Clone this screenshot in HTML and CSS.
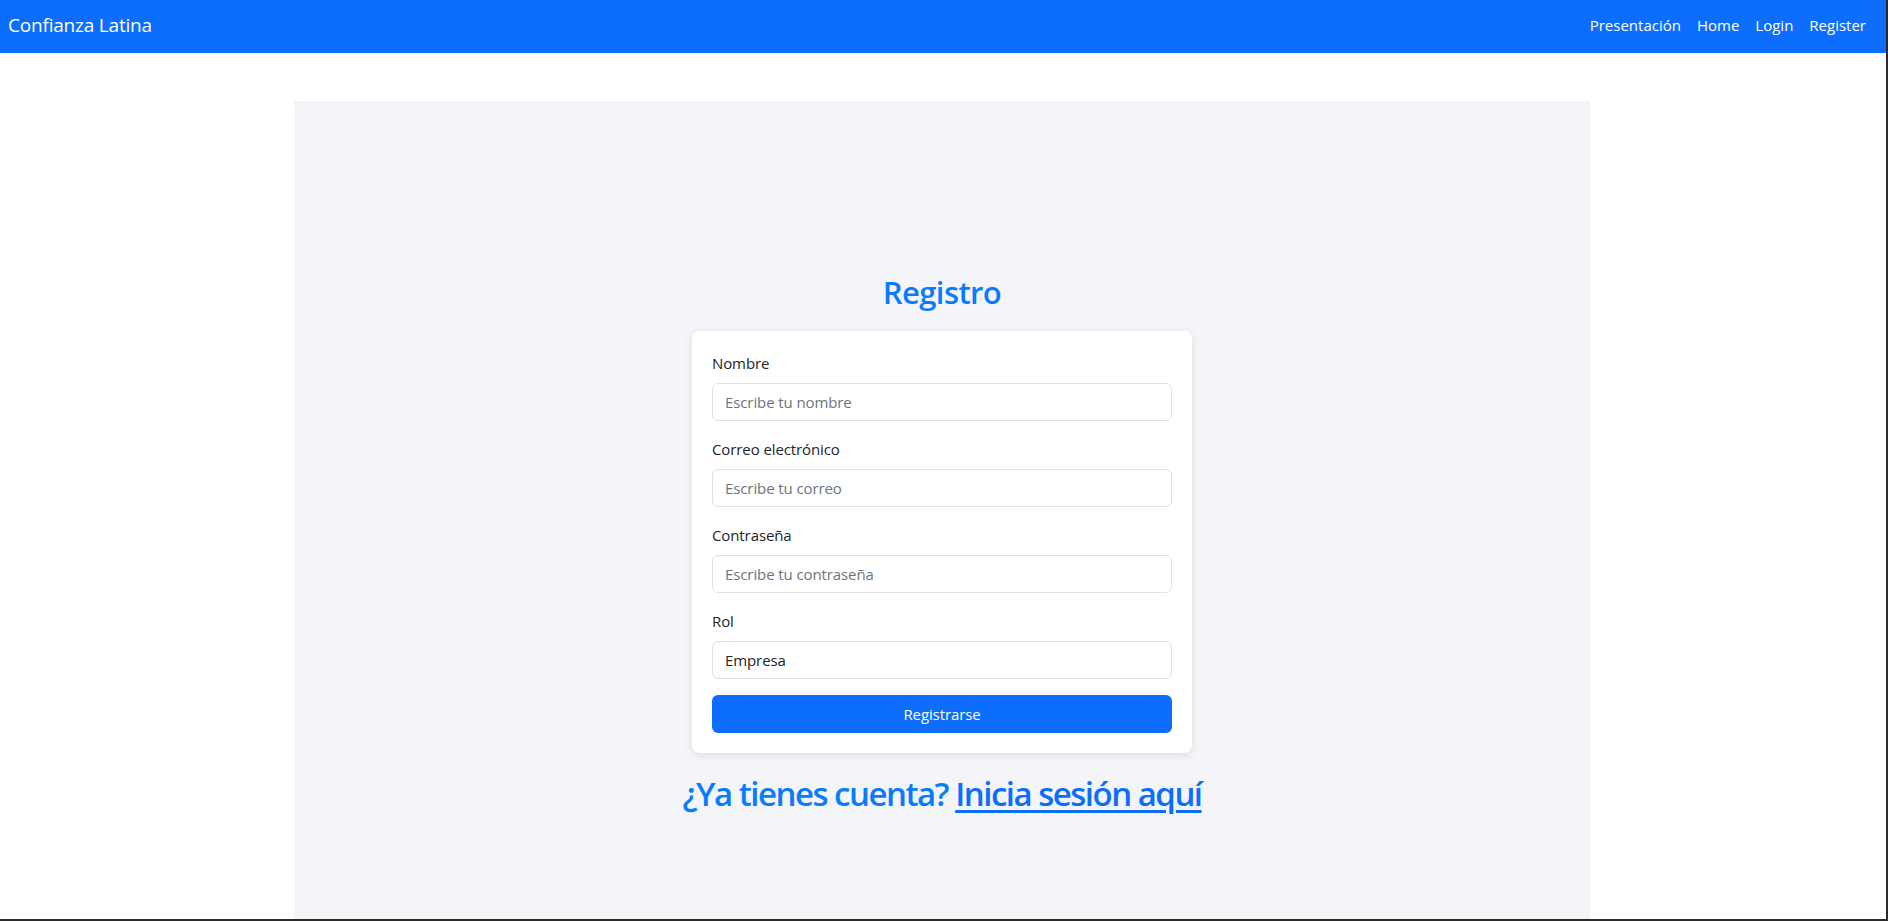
FILE: index.html
```html
<!DOCTYPE html>
<html lang="es">
<head>
<meta charset="utf-8">
<title>Registro - Confianza Latina</title>
<link rel="stylesheet" href="styles.css">
</head>
<body>
<nav class="navbar">
  <a class="brand" href="#">Confianza Latina</a>
  <ul class="nav-links">
    <li><a href="#">Presentación</a></li>
    <li><a href="#">Home</a></li>
    <li><a href="#">Login</a></li>
    <li><a href="#">Register</a></li>
  </ul>
</nav>
<main class="main">
  <section class="panel">
    <h2 class="title">Registro</h2>
    <form class="card">
      <div class="field">
        <label class="label" for="nombre">Nombre</label>
        <input class="input" id="nombre" type="text" placeholder="Escribe tu nombre">
      </div>
      <div class="field">
        <label class="label" for="correo">Correo electrónico</label>
        <input class="input" id="correo" type="email" placeholder="Escribe tu correo">
      </div>
      <div class="field">
        <label class="label" for="pass">Contraseña</label>
        <input class="input" id="pass" type="password" placeholder="Escribe tu contraseña">
      </div>
      <div class="field">
        <label class="label" for="rol">Rol</label>
        <div class="input select" id="rol">Empresa</div>
      </div>
      <button class="btn" type="button">Registrarse</button>
    </form>
    <h2 class="cta">¿Ya tienes cuenta? <a href="#" class="cta-link">Inicia sesión aquí</a></h2>
  </section>
</main>
<div class="frame"></div>
</body>
</html>
```

FILE: styles.css
```css
* { box-sizing: border-box; }
html, body { margin: 0; padding: 0; }
body {
  font-family: "Open Sans", "Noto Sans", "Liberation Sans", sans-serif;
  color: #212529;
  background: #fff;
  height: 921px;
  overflow: hidden;
}
.navbar {
  height: 53px;
  background: #0d6efd;
  display: flex;
  align-items: center;
  justify-content: space-between;
  padding: 0 12px 4px 8px;
  margin-right: 2px;
}
.brand {
  color: #fff;
  text-decoration: none;
  font-size: 19px;
  letter-spacing: -0.2px;
}
.nav-links {
  list-style: none;
  margin: 0;
  padding: 0;
  display: flex;
}
.nav-links a {
  display: block;
  color: #fff;
  text-decoration: none;
  font-size: 15px;
  padding: 0 8px;
  letter-spacing: 0;
}
.main {
  padding: 48px 4px 0 0;
}
.panel {
  width: 1296px;
  margin: 0 auto;
  min-height: 921px;
  background: #f4f5f9;
  display: flex;
  flex-direction: column;
  align-items: center;
  padding-top: 171px;
}
.title {
  margin: 0 0 19px;
  font-size: 31px;
  line-height: 40px;
  font-weight: 600;
  color: #0a7bfb;
  letter-spacing: -0.6px;
}
.card {
  width: 500px;
  background: #fff;
  border-radius: 8px;
  box-shadow: 0 2px 8px rgba(0, 0, 0, 0.1);
  padding: 20px;
  display: flex;
  flex-direction: column;
}
.field {
  display: flex;
  flex-direction: column;
  margin-bottom: 16px;
}
.label {
  font-size: 15px;
  line-height: 24px;
  margin-bottom: 8px;
  color: #212529;
  letter-spacing: -0.1px;
}
.input {
  height: 38px;
  border: 1px solid #dee2e6;
  border-radius: 6px;
  padding: 0 12px;
  font-family: inherit;
  font-size: 15px;
  color: #212529;
  background: #fff;
  outline: none;
  letter-spacing: -0.1px;
}
.input::placeholder { color: #6c757d; }
.select {
  display: flex;
  align-items: center;
}
.btn {
  height: 38px;
  border: 0;
  border-radius: 6px;
  background: #0d6efd;
  color: #fff;
  font-family: inherit;
  font-size: 15px;
  letter-spacing: -0.1px;
}
.cta {
  margin: 21px 0 0;
  font-size: 33px;
  line-height: 40px;
  font-weight: 600;
  color: #0a7bfb;
  letter-spacing: -1.5px;
}
.cta-link {
  color: #0d6efd;
  text-decoration: underline;
  text-underline-offset: 4px;
}
.frame {
  position: fixed;
  inset: 0;
  border-right: 2px solid #2b2b2b;
  border-bottom: 2px solid #2b2b2b;
  pointer-events: none;
}
```
